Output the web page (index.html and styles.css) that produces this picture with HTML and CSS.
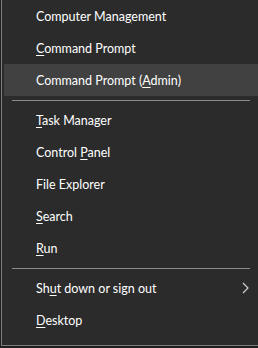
FILE: index.html
```html
<!DOCTYPE html>
<html lang="en">
<head>
    <meta charset="UTF-8">
    <title>Quick Link Menu</title>
    <link rel="stylesheet" href="styles.css">
</head>
<body>
    <ul class="menu">
        <li class="item"><span>Computer Mana<u>g</u>ement</span></li>
        <li class="item"><span><u>C</u>ommand Prompt</span></li>
        <li class="item active"><span>Command Prompt (<u>A</u>dmin)</span></li>
        <li class="sep"></li>
        <li class="item"><span><u>T</u>ask Manager</span></li>
        <li class="item"><span>Control <u>P</u>anel</span></li>
        <li class="item"><span>File Explorer</span></li>
        <li class="item"><span><u>S</u>earch</span></li>
        <li class="item"><span><u>R</u>un</span></li>
        <li class="sep"></li>
        <li class="item">
            <span>Sh<u>u</u>t down or sign out</span>
            <svg class="chevron" width="7" height="12" viewBox="0 0 7 12">
                <path d="M1 1 L6 6 L1 11" fill="none" stroke="#d6d6d6" stroke-width="1.1"/>
            </svg>
        </li>
        <li class="item"><span><u>D</u>esktop</span></li>
    </ul>
</body>
</html>
```
FILE: styles.css
```css
body {
    margin: 0;
    background-color: #1f1f1f;
    font-family: Lato, sans-serif;
    font-size: 12.5px;
    color: #ffffff;
}

.menu {
    list-style: none;
    margin: 0 0 0 1px;
    padding: 0 0 9px 2px;
    background-color: #2b2b2b;
    border-left: 1px solid #7d7d7d;
    border-bottom: 1px solid #7d7d7d;
}

.item {
    height: 32px;
    padding-left: 32px;
    padding-right: 9px;
    display: flex;
    align-items: center;
    justify-content: space-between;
}

.item u {
    text-underline-offset: 2px;
}

.active {
    background-color: #414141;
}

.sep {
    height: 8px;
    display: flex;
    align-items: center;
    margin: 0 8px 0 8px;
}

.sep::before {
    content: "";
    flex: 1;
    height: 1px;
    background-color: #8a8a8a;
}

.chevron {
    display: block;
}
```
